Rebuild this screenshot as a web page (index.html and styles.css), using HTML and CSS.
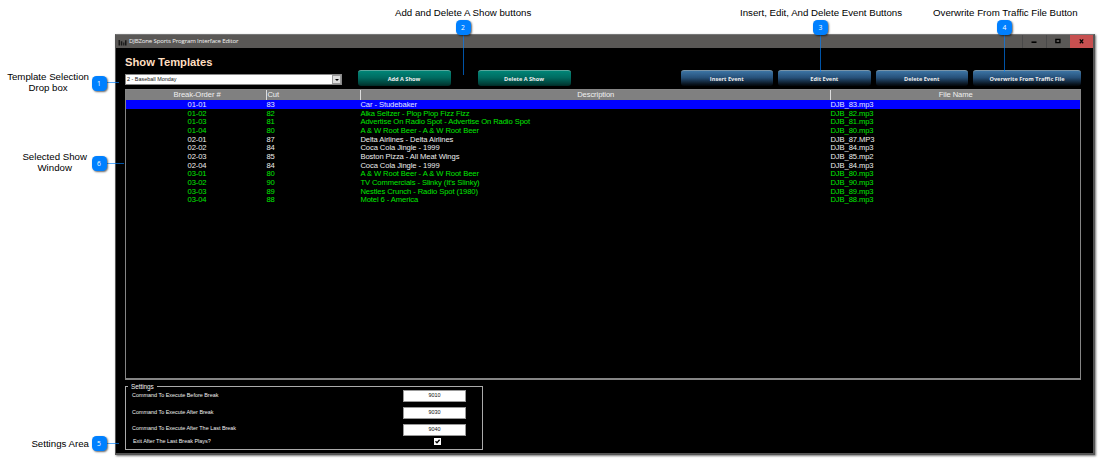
FILE: index.html
```
<!DOCTYPE html>
<html lang="en">
<head>
<meta charset="utf-8">
<title>DJBZone Sports Program Interface Editor</title>
<link rel="stylesheet" href="styles.css">
</head>
<body>
<main class="window">
  <header class="titlebar">
    <svg class="app-icon" viewBox="0 0 9 7"><path d="M0.5 1h1.5v5.5H.5zM2.8 2.2h1.5v4.3H2.8zM5.2 3.5h1.2v3H5.2zM7 1.2h1.5v5.3H7z" fill="#171717"/></svg>
    <span class="title">DJBZone Sports Program Interface Editor</span>
    <div class="controls">
      <span class="control"><svg viewBox="0 0 24 13"><path d="M9.5 6.4h5v1.6h-5z" fill="#000"/></svg></span>
      <span class="control"><svg viewBox="0 0 24 13"><path d="M9.9 4.4h4v3.2h-4z" fill="none" stroke="#000" stroke-width="1.4"/></svg></span>
      <span class="control close"><svg viewBox="0 0 24 13"><path d="M10.8 4.4l3.4 3.8M14.2 4.4L10.8 8.2" stroke="#000" stroke-width="1.3"/></svg></span>
    </div>
  </header>
  <h1 class="heading">Show Templates</h1>
  <div class="toolbar">
    <div class="select"><span>2 - Baseball Monday</span><i class="arrow"></i></div>
    <div class="group show-group">
      <button class="btn teal">Add A Show</button>
      <button class="btn teal">Delete A Show</button>
    </div>
    <div class="group event-group">
      <button class="btn">Insert Event</button>
      <button class="btn">Edit Event</button>
      <button class="btn">Delete Event</button>
      <button class="btn wide">Overwrite From Traffic File</button>
    </div>
  </div>
  <section class="table">
    <div class="row head"><span>Break-Order #</span><span>Cut</span><span>Description</span><span>File Name</span></div>
    <div class="row selected"><span>01-01</span><span>83</span><span>Car - Studebaker</span><span>DJB_83.mp3</span></div>
    <div class="row green"><span>01-02</span><span>82</span><span>Alka Seltzer - Plop Plop Fizz Fizz</span><span>DJB_82.mp3</span></div>
    <div class="row green"><span>01-03</span><span>81</span><span>Advertise On Radio Spot - Advertise On Radio Spot</span><span>DJB_81.mp3</span></div>
    <div class="row green"><span>01-04</span><span>80</span><span>A &amp; W Root Beer - A &amp; W Root Beer</span><span>DJB_80.mp3</span></div>
    <div class="row"><span>02-01</span><span>87</span><span>Delta Airlines - Delta Airlines</span><span>DJB_87.MP3</span></div>
    <div class="row"><span>02-02</span><span>84</span><span>Coca Cola Jingle - 1999</span><span>DJB_84.mp3</span></div>
    <div class="row"><span>02-03</span><span>85</span><span>Boston Pizza - All Meat Wings</span><span>DJB_85.mp2</span></div>
    <div class="row"><span>02-04</span><span>84</span><span>Coca Cola Jingle - 1999</span><span>DJB_84.mp3</span></div>
    <div class="row green"><span>03-01</span><span>80</span><span>A &amp; W Root Beer - A &amp; W Root Beer</span><span>DJB_80.mp3</span></div>
    <div class="row green"><span>03-02</span><span>90</span><span>TV Commercials - Slinky (It's Slinky)</span><span>DJB_90.mp3</span></div>
    <div class="row green"><span>03-03</span><span>89</span><span>Nestles Crunch - Radio Spot (1980)</span><span>DJB_89.mp3</span></div>
    <div class="row green"><span>03-04</span><span>88</span><span>Motel 6 - America</span><span>DJB_88.mp3</span></div>
  </section>
  <section class="settings">
    <span class="legend">Settings</span>
    <div class="setting"><span>Command To Execute Before Break</span><b class="field">9010</b></div>
    <div class="setting"><span>Command To Execute After Break</span><b class="field">9030</b></div>
    <div class="setting last-break"><span>Command To Execute After The Last Break</span><b class="field">9040</b></div>
    <div class="setting exit"><span>Exit After The Last Break Plays?</span><b class="check"><svg viewBox="0 0 7 7"><path d="M1.5 3.2L3 4.8L5.6 1.8" fill="none" stroke="#000" stroke-width="1.3"/></svg></b></div>
  </section>
</main>

<div class="note n1"><p>Template Selection<br>Drop box</p><i class="line"></i><b class="badge">1</b></div>
<div class="note n6"><p>Selected Show<br>Window</p><i class="line"></i><b class="badge">6</b></div>
<div class="note n5"><p>Settings Area</p><i class="line"></i><b class="badge">5</b></div>
<div class="note top n2"><p>Add and Delete A Show buttons</p><i class="line"></i><b class="badge">2</b></div>
<div class="note top n3"><p>Insert, Edit, And Delete Event Buttons</p><i class="line"></i><b class="badge">3</b></div>
<div class="note top n4"><p>Overwrite From Traffic File Button</p><i class="line"></i><b class="badge">4</b></div>
</body>
</html>
```
FILE: styles.css
```
* { box-sizing: border-box; }
body { margin: 0; padding: 34px 0 0 115px; height: 460px; overflow: hidden; background: #fff; font-family: "Liberation Sans", sans-serif; position: relative; }

.window { width: 980px; height: 421px; background: #000; border: 1px solid #555; border-top-color: #777; border-width: 1px 2px 2px 1.5px; box-shadow: 1px 1px 2px rgba(0,0,0,.55); display: flex; flex-direction: column; }
.titlebar { height: 13px; flex: none; background: #5a5856; display: flex; align-items: center; }
.app-icon { width: 9px; height: 7px; margin: 2px 0 0 2px; flex: none; }
.title { margin-left: 2px; color: #f4f4f4; font: 6.1px/12px "Open Sans", sans-serif; letter-spacing: -.17px; white-space: nowrap; height: 13px; }
.controls { margin-left: auto; display: flex; height: 13px; }
.control { width: 24px; border-left: 1px solid #494949; }
.control svg { display: block; width: 24px; height: 13px; margin-left: -1px; }
.close { background: #c75050; width: 23px; border: 0; }

.heading { margin: 7px 0 0 9px; height: 15px; flex: none; font-size: 11.2px; line-height: 15px; color: #ffdfc0; white-space: nowrap; }
.toolbar { margin: 0 12px 0 9px; height: 19px; flex: none; display: flex; align-items: flex-start; }
.select { width: 217px; height: 11px; margin-top: 4px; background: #fff; border: 1px solid #888; display: flex; justify-content: space-between; font-size: 5.45px; line-height: 9px; padding-left: 1px; color: #111; }
.arrow { width: 9px; background: #ddd; border: 1px solid #999; display: flex; align-items: center; justify-content: center; }
.arrow::after { content: ""; border: 2px solid transparent; border-top-color: #000; border-bottom: 0; }
.group { display: flex; }
.show-group { margin-left: 15.5px; gap: 27px; }
.event-group { margin-left: auto; gap: 5px; }
.btn { width: 92.5px; height: 16px; margin: 0; padding: 0; border: 0; border-top: 1px solid #7894a8; border-radius: 3px; background: linear-gradient(#3c74a4, #265079 45%, #09131d 88%, #02060a); color: #eee; font: bold 5.6px/14px "Open Sans", sans-serif; white-space: nowrap; }
.btn.teal { width: 93px; border-top-color: #58a79c; background: linear-gradient(#008577, #006b60 45%, #003d36 88%, #002a25); }
.btn.wide { width: 108px; }

.table { margin: 0 12px 0 9px; height: 291px; flex: none; border: 1px solid #858585; border-width: 1px 1px 2px 1px; }
.row { height: 8.67px; display: grid; grid-template-columns: 140px 94px 470px 1fr; line-height: 9px; font-size: 7.6px; letter-spacing: -.08px; color: #eee; white-space: nowrap; }
.row span:first-child { text-align: center; padding-left: 2px; }
.row span + span { padding-left: .4px; }
.head { height: 10px; line-height: 9.5px; background: #808080; color: #f0f0f0; }
.head span + span { border-left: 1px solid #ddd; }
.head span:nth-child(n+3) { text-align: center; }
.selected { background: #00f; color: #e6e6ff; }
.green { color: #00ea00; }

.settings { position: relative; margin: 6px 0 0 9px; width: 358px; height: 64px; flex: none; border: 1px solid #aaa; display: flex; flex-direction: column; gap: 5px; padding: 3px 16px 0 6px; color: #f0f0f0; font-size: 5.43px; }
.legend { position: absolute; left: 2px; top: -4px; padding: 0 3px; line-height: 8px; font-size: 6.4px; letter-spacing: -.04px; background: #000; }
.setting { display: flex; justify-content: space-between; height: 12px; line-height: 10px; white-space: nowrap; }
.field { width: 63px; height: 12px; background: #fff; border: 1px solid #999; color: #111; font-weight: normal; text-align: center; line-height: 8px; }
.last-break { line-height: 9px; }
.exit { margin-top: -3px; height: 7px; line-height: 6px; padding-left: 1px; }
.check { width: 7px; height: 7px; background: #fff; margin-right: 25px; }
.check svg { display: block; width: 7px; height: 7px; }

.note { position: absolute; color: #000; font-size: 9.7px; line-height: 11.4px; text-align: center; white-space: nowrap; }
.note p { margin: 0; }
.badge { position: absolute; width: 15px; height: 15px; border-radius: 4.5px; background: #0080ff; box-shadow: 1px 1px 2px rgba(0,0,0,.6); color: #fff; font: 6.8px/15px "Open Sans", sans-serif; }
.line { position: absolute; background: rgba(0,128,255,.65); }
.n1, .n5, .n6 { right: 1011px; }
.n1 { top: 71px; }
.n6 { top: 151px; right: 1013px; }
.n5 { top: 438px; }
.n1 .badge, .n5 .badge { left: calc(100% + 2.5px); }
.n6 .badge { left: calc(100% + 4.5px); }
.n1 .badge, .n6 .badge { top: 4.5px; }
.n5 .badge { top: -2px; }
.n1 .line, .n5 .line, .n6 .line { left: calc(100% + 17px); width: 13px; height: 1px; top: 11px; }
.n6 .line { left: calc(100% + 19px); width: 18px; top: 12px; }
.n5 .line { top: 5px; }
.top { top: 7px; }
.top .badge { top: 13px; left: var(--x); }
.top .line { top: 28px; width: 1px; left: calc(var(--x) + 7px); height: 37px; }
.n2 { left: 395px; --x: 60.5px; }
.n2 .line { height: 40px; }
.n3 { left: 740px; --x: 73px; }
.n4 { left: 933px; --x: 64px; }
```
